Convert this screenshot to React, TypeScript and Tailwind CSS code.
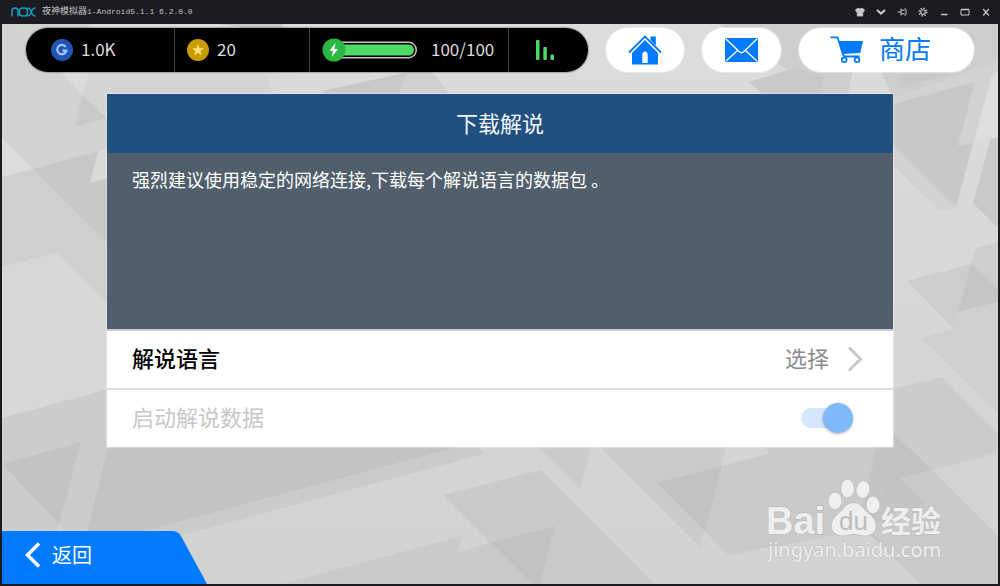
import React from 'react';

type Shape = { points: string; fill: string };

const SHARDS: Shape[] = [
  // upper left
  { points: '2,24 90,24 62,73 33,169 2,138', fill: '#d3d3d3' },
  { points: '62,73 89,73 82,95', fill: '#dcdcdc' },
  { points: '2,24 62,73 107,118 120,130 120,146 98,151 33,169 2,138', fill: '#d2d2d2' },
  { points: '62,73 89,73 82,95', fill: '#dcdcdc' },
  { points: '82,95 107,118 75,127', fill: '#c9c9c9' },
  { points: '2,138 33,169 2,177', fill: '#dcdcdc' },
  { points: '2,177 33,169 107,242 107,303 56,253 2,267', fill: '#cfcfcf' },
  { points: '33,169 98,151 90,183 120,175 120,255', fill: '#c8c8c8' },
  { points: '2,267 56,253 107,303 107,390 2,418', fill: '#d7d7d7' },
  // lower left
  { points: '2,418 120,386 120,535 2,535', fill: '#cccccc' },
  { points: '2,464 81,442 59,524', fill: '#c3c3c3' },
  { points: '2,464 59,524 57,531 2,531', fill: '#cccccc' },
  { points: '59,524 65,531 57,531', fill: '#d3d3d3' },
  { points: '108,447 458,447 145,531 87,531', fill: '#c3c3c3' },
  { points: '458,447 478,447 484,454 182,535 145,531', fill: '#cbcbcb' },
  // bottom
  { points: '443,495 541,470 655,584 282,584 462,536 458,552 490,543', fill: '#cacaca' },
  { points: '490,543 555,526 540,584 532,584', fill: '#c2c2c2' },
  { points: '538,447 591,447 580,489', fill: '#cbcbcb' },
  { points: '600,447 726,447 700,547', fill: '#cbcbcb' },
  { points: '657,483 770,453 764,447 998,447 998,584 921,584 868,529 728,555', fill: '#cacaca' },
  { points: '722,466 726,447 764,447 770,453', fill: '#d4d4d4' },
  { points: '657,483 722,466 705,531', fill: '#c2c2c2' },
  { points: '873,460 880,432 893,432 932,470 900,478 998,584 921,584 860,525', fill: '#c4c4c4' },
  { points: '900,478 998,452 998,584 921,584 868,529 890,515 925,504', fill: '#cacaca' },
  { points: '900,478 932,470 998,536 998,452 931,469', fill: '#d3d3d3' },
  { points: '893,432 932,470 900,478 925,504 890,504 873,460', fill: '#c2c2c2' },
  // right
  { points: '893,389 942,377 998,434 998,452 932,470 893,432', fill: '#cccccc' },
  { points: '921,338 954,329 958,312 998,302 998,413', fill: '#cfcfcf' },
  { points: '907,281 971,264 958,312 954,329', fill: '#cdcdcd' },
  { points: '976,248 998,242 998,288 971,264', fill: '#cecece' },
  { points: '971,264 998,288 998,302 958,312', fill: '#c5c5c5' },
  { points: '991,138 998,137 998,228 973,203', fill: '#c9c9c9' },
  { points: '860,24 998,24 998,62 893,98', fill: '#cdcdcd' },
  { points: '893,98 998,62 998,70 991,78 956,207 940,211 893,165', fill: '#d2d2d2' },
  { points: '893,104 975,82 958,146 973,143 956,207 893,144', fill: '#c8c8c8' },
  { points: '991,78 998,70 998,137 974,143', fill: '#dedede' },
  { points: '901,74 954,74 899,87', fill: '#c9c9c9' },
  // top
  { points: '719,24 862,24 848,94 765,94 749,82 790,72', fill: '#cecece' },
  { points: '749,82 795,68 824,76 820,94 762,94', fill: '#c9c9c9' },
  { points: '89,73 95,60 248,34 300,72 267,75 280,94 107,94 107,118 82,95', fill: '#d4d4d4' },
  { points: '267,75 300,72 320,84 272,94', fill: '#dadada' },
  { points: '327,90 408,72 400,94 320,94', fill: '#c9c9c9' },
  { points: '408,72 432,72 450,94 400,94', fill: '#d0d0d0' },
  { points: '218,24 283,24 283,34', fill: '#c9c9c9' },
];

function Backdrop() {
  return (
    <svg
      className="absolute inset-0 h-full w-full"
      viewBox="2 24 996 560"
      preserveAspectRatio="xMidYMid slice"
      aria-hidden="true"
    >
      <defs>
        <linearGradient id="base" x1="0" y1="0" x2="0" y2="1">
          <stop offset="0" stopColor="#dcdcdc" />
          <stop offset="1" stopColor="#d2d2d2" />
        </linearGradient>
      </defs>
      <rect x="2" y="24" width="996" height="560" fill="url(#base)" />
      {SHARDS.map((s, i) => (
        <polygon key={i} points={s.points} fill={s.fill} />
      ))}
    </svg>
  );
}

function ChromeButton({ label, children }: { label: string; children: React.ReactNode }) {
  return (
    <button type="button" aria-label={label} className="flex h-6 w-[21px] items-center justify-center">
      <svg viewBox="0 0 10 10" className="size-[10px]" fill="none" stroke="#c9c9cb" aria-hidden="true">
        {children}
      </svg>
    </button>
  );
}

function TitleBar() {
  return (
    <header className="flex h-6 items-center bg-[#1c1b20] pl-[11px] pr-1">
      <svg viewBox="0 0 25 10" className="h-[10px] w-[25px]" fill="none" stroke="#10a4bd" strokeWidth="1.5" aria-label="nox">
        <path d="M1 9.500V4Q1 1 4 1T7 4V9.500" />
        <rect x="8.500" y="1" width="8" height="8" rx="3" />
        <path d="M16.500 1Q18.500 1 19.500 3L21.500 7.500Q22.200 9 24.500 9M24.500 1Q22.200 1 21.500 2.500L19.500 7Q18.500 9 16.500 9" />
      </svg>
      <h1 className="ml-[6px] flex items-center font-['Liberation_Mono','Noto_Sans_CJK_SC',monospace] text-[8px] leading-6 text-[#c4c4c6]">
        <span className="text-[9px]">夜神模拟器</span>
        <span>1-Android5.1.1 6.2.0.0</span>
      </h1>
      <div className="ml-auto flex">
        <ChromeButton label="主题">
          <path d="M3 1.200 .6 2.800 1.400 5H2.300V9H7.700V5H8.600L9.400 2.800 7 1.200Q5 2.600 3 1.200Z" fill="#c9c9cb" strokeWidth=".8" />
        </ChromeButton>
        <ChromeButton label="更多">
          <path d="M1 3 5 6.500 9 3" strokeWidth="2.200" />
        </ChromeButton>
        <ChromeButton label="置顶">
          <path d="M.5 5H4M4 1.500V8.500M4 3.200H7.500M4 6.800H7.500M7.500 1.800Q9.500 1.500 9 3.500V6.500Q9.500 8.500 7.500 8.200" />
        </ChromeButton>
        <ChromeButton label="设置">
          <circle cx="5" cy="5" r="2.300" strokeWidth="1.100" />
          <circle cx="5" cy="5" r="3.800" strokeWidth="1.400" strokeDasharray="1.400 1.580" />
        </ChromeButton>
        <ChromeButton label="最小化">
          <path d="M2 7.500H8.500" strokeWidth="1.500" />
        </ChromeButton>
        <ChromeButton label="最大化">
          <path d="M1 2.500H9V8H1Z" />
          <path d="M1 2.500H9" strokeWidth="1.500" />
        </ChromeButton>
        <ChromeButton label="关闭">
          <path d="M2.200 2 7.800 8.500M7.800 2 2.200 8.500" strokeWidth="1.200" />
        </ChromeButton>
      </div>
    </header>
  );
}

function StatusBar() {
  return (
    <div className="flex h-11 items-stretch overflow-hidden rounded-full bg-black text-[17px] leading-6 text-[#dedede] shadow-[0_0_1px_1px_rgba(0,0,0,0.25)]">
      <div className="flex w-[149px] items-center gap-2 border-r border-[#3c3c3c] pl-[25px]">
        <svg viewBox="0 0 22 22" className="size-[22px]" aria-hidden="true">
          <circle cx="11" cy="11" r="11" fill="#1f56b5" />
          <path d="M14.700 7.800A4.700 4.700 0 1 0 15.500 11.600H11.400" fill="none" stroke="#a8c6fb" strokeWidth="2.100" />
        </svg>
        <span className="pb-[2px]">1.0K</span>
      </div>
      <div className="flex w-[135px] items-center gap-2 border-r border-[#3c3c3c] pl-3">
        <svg viewBox="0 0 22 22" className="size-[22px]" aria-hidden="true">
          <circle cx="11" cy="11" r="11" fill="#c99c00" />
          <path d="M11 5 12.500 9.200 17 9.300 13.400 12 14.700 16.300 11 13.800 7.300 16.300 8.600 12 5 9.300 9.500 9.200Z" fill="#ffe27a" />
        </svg>
        <span className="pb-[2px]">20</span>
      </div>
      <div className="flex w-[199px] items-center gap-[14px] border-r border-[#3c3c3c] pl-3">
        <svg viewBox="0 0 95 24" className="h-6 w-[95px]" aria-hidden="true">
          <rect x="10.750" y="4.250" width="83.500" height="15.500" rx="7.750" fill="#000" stroke="#c4c4c4" strokeWidth="1.500" />
          <rect x="12" y="6.500" width="80" height="11" rx="5.500" fill="#4cd964" />
          <circle cx="12" cy="12" r="11.500" fill="#2cb742" />
          <path d="M13.500 5 7.500 12.800H11L9.800 19 16 11H12.400Z" fill="#fff" />
        </svg>
        <span className="pb-[2px]">100/100</span>
      </div>
      <div className="flex w-[79px] items-center pl-[27px]">
        <svg viewBox="0 0 18 20" className="h-5 w-[18px]" fill="#4cd964" aria-hidden="true">
          <rect x="0" y="0" width="3.500" height="20" rx="1" />
          <rect x="7.300" y="7" width="3.500" height="13" rx="1" />
          <rect x="14.500" y="14.500" width="3.500" height="5.500" rx="1" />
        </svg>
      </div>
    </div>
  );
}

function TopBar() {
  const pill = 'flex h-11 items-center rounded-full bg-white text-[#007aff] shadow-[0_0_1px_1px_rgba(255,255,255,0.4)]';
  return (
    <nav className="flex flex-wrap gap-[18px] px-6 pt-1">
      <StatusBar />
      <button type="button" aria-label="主页" className={`${pill} w-[78px] justify-center`}>
        <svg viewBox="0 0 34 30" className="h-[30px] w-[34px]" fill="currentColor" aria-hidden="true">
          <path d="M22.500 1.500H27.800V16L22.500 10Z" />
          <path d="M1 18.500 17 2.700 33 18.500" fill="none" stroke="#fff" strokeWidth="4" />
          <path fillRule="evenodd" d="M17 5 30 18V29.500H4V18ZM14.300 28V20Q14.300 16.500 17 16.500T19.700 20V28Z" />
          <path d="M1 17.500 17 1.500 33 17.500" fill="none" stroke="currentColor" strokeWidth="1.800" />
        </svg>
      </button>
      <button type="button" aria-label="邮件" className={`${pill} w-[79px] justify-center`}>
        <svg viewBox="0 0 33 24" className="h-6 w-[33px]" aria-hidden="true">
          <rect width="33" height="24" rx="1.500" fill="currentColor" />
          <path d="M1 1 14 13.500Q16.500 16 19 13.500L32 1M1 23 12.500 12.500M32 23 20.500 12.500" fill="none" stroke="#fff" strokeWidth="1.300" />
        </svg>
      </button>
      <button type="button" className={`${pill} w-[175px] gap-4 pl-[31px] text-[26px] leading-9`}>
        <svg viewBox="0 0 33 28" className="h-7 w-[33px]" fill="none" stroke="currentColor" strokeWidth="1.800" aria-hidden="true">
          <path d="M.5 1.300H7.500L13 18.500Q13.500 20.500 15.500 20.500H29.500" />
          <path d="M8.500 5H33L30.300 17 12.800 18Z" fill="currentColor" stroke="none" />
          <circle cx="14.200" cy="23.800" r="2.400" />
          <circle cx="27" cy="23.800" r="2.400" />
        </svg>
        <span className="pb-1">商店</span>
      </button>
    </nav>
  );
}

function DownloadPanel() {
  return (
    <section className="mx-[105px] mt-[22px] text-[22px] shadow-[0_0_1px_1px_rgba(255,255,255,0.3)]">
      <h2 className="flex h-[59px] items-center justify-center bg-[#20507f] pb-[2px] text-[#f2f5f8]">下载解说</h2>
      <div className="min-h-44 bg-[#515f6c] px-[25px] pt-3 text-[18px] leading-7 text-white">
        <p>强烈建议使用稳定的网络连接,下载每个解说语言的数据包 。</p>
      </div>
      <button
        type="button"
        className="flex h-[61px] w-full items-center border-y-2 border-[#dedede] border-t-[#c9cdd1] bg-white pb-[2px] pl-[25px] pr-[30px] text-left"
      >
        <span className="pb-[2px] font-medium text-black">解说语言</span>
        <span className="ml-auto pb-[2px] text-[#8a8a8e]">选择</span>
        <svg viewBox="0 0 16 26" className="ml-[18px] h-[26px] w-4" fill="none" stroke="#c7c7cc" strokeWidth="3" aria-hidden="true">
          <path d="M2 1.500 13.500 13 2 24.500" />
        </svg>
      </button>
      <div className="flex h-[57px] items-center bg-white pb-[2px] pl-[25px] pr-11">
        <label htmlFor="commentary" className="pb-[2px] text-[#c7c7cc]">
          启动解说数据
        </label>
        <input
          id="commentary"
          type="checkbox"
          role="switch"
          defaultChecked
          disabled
          className="relative ml-auto h-5 w-12 appearance-none rounded-full bg-[#d5e7fc] before:absolute before:-top-[5px] before:left-[22px] before:size-[30px] before:rounded-full before:bg-[#7fbafc] before:shadow-[0_1px_3px_rgba(0,0,0,0.3)] before:content-['']"
        />
      </div>
    </section>
  );
}

function Watermark() {
  return (
    <svg
      className="absolute bottom-4 right-[50px] h-[90px] w-[182px]"
      viewBox="0 0 182 90"
      fill="#efefef"
      stroke="#bdbdbd"
      strokeWidth="1.500"
      paintOrder="stroke"
      aria-hidden="true"
    >
      <text x="0" y="56" fontFamily="Liberation Sans, sans-serif" fontWeight="700" fontSize="38">Bai</text>
      <ellipse cx="69" cy="23" rx="6.500" ry="8.500" />
      <ellipse cx="81.500" cy="10.500" rx="6.500" ry="9" />
      <ellipse cx="97" cy="11.500" rx="6.500" ry="8.500" transform="rotate(10 97 11.500)" />
      <ellipse cx="107" cy="27" rx="6.500" ry="8.500" />
      <path d="M87.500 25C95 25 97 31 103 36C113 43 112 57.500 99 57.500C94 57.500 92 56 88 56C84 56 82 57.500 77 57.500C63 57.500 63 44 71 37C77 32 80 25 87.500 25Z" />
      <text x="73" y="52" fill="#bdbdbd" stroke="none" fontFamily="Liberation Sans, sans-serif" fontSize="26">du</text>
      <text x="115" y="54" fontFamily="Noto Sans CJK SC, sans-serif" fontWeight="700" fontSize="30">经验</text>
      <text x="2" y="79" strokeWidth="1" fontFamily="Noto Sans, sans-serif" fontSize="20">jingyan.baidu.com</text>
    </svg>
  );
}

export default function App() {
  return (
    <div className="flex min-h-screen flex-col bg-[#1c1b20] font-['Noto_Sans_CJK_SC',sans-serif]">
      <TitleBar />
      <main className="relative mx-[2px] mb-[2px] flex grow flex-col overflow-hidden">
        <Backdrop />
        <div className="relative flex grow flex-col">
          <TopBar />
          <DownloadPanel />
          <button
            type="button"
            className="relative mt-auto flex h-[53px] w-[205px] items-center gap-3 pb-[6px] pl-[23px] text-[20px] text-white"
          >
            <svg viewBox="0 0 205 53" className="absolute inset-0 h-full w-full" aria-hidden="true">
              <path d="M0 0H170Q176 0 179 5L205 53H0Z" fill="#007aff" />
            </svg>
            <svg viewBox="0 0 15 26" className="relative h-[26px] w-[15px]" fill="none" stroke="#fff" strokeWidth="3.500" aria-hidden="true">
              <path d="M14 1.500 2.500 13 14 24.500" />
            </svg>
            <span className="relative">返回</span>
          </button>
        </div>
        <Watermark />
      </main>
    </div>
  );
}
